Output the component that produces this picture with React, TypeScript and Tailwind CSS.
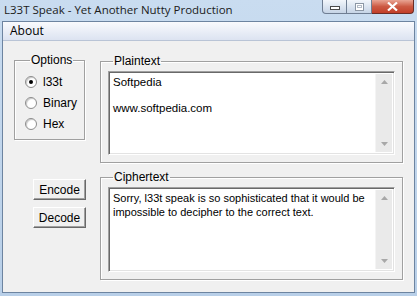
const ui = { fontFamily: '"Liberation Sans", Arial, sans-serif' };
const seg = { fontFamily: '"Open Sans", "Noto Sans", sans-serif' };

function GroupBox({ label, className, children }: { label: string; className: string; children?: React.ReactNode }) {
  return (
    <fieldset
      className={`border border-[#a0a0a0] shadow-[inset_1px_1px_0_#fff,1px_1px_0_#fff] px-[7px] ${className}`}
    >
      <legend className="ml-[5px] px-[1px] text-[12px] leading-[12px] text-black">{label}</legend>
      {children}
    </fieldset>
  );
}

function Radio({ label, checked }: { label: string; checked?: boolean }) {
  return (
    <div className="flex items-center gap-[6px] h-[21px]">
      <div className="w-[12px] h-[12px] rounded-full bg-white border border-[#8c8c8c] shadow-[inset_1px_1px_1px_#c8c8c8] flex items-center justify-center">
        {checked && <div className="w-[4px] h-[4px] rounded-full bg-black" />}
      </div>
      <span className="text-[12px] text-black">{label}</span>
    </div>
  );
}

function ScrollBar() {
  return (
    <div className="w-[17px] h-full bg-[#eaeaea] border-l border-[#f4f4f4] flex flex-col items-center justify-between py-[6px] shrink-0">
      <svg width="7" height="4" viewBox="0 0 7 4"><path d="M3.5 0L7 4H0z" fill="#a8a8a8" /></svg>
      <svg width="7" height="4" viewBox="0 0 7 4"><path d="M0 0h7L3.5 4z" fill="#a8a8a8" /></svg>
    </div>
  );
}

function TextBox({ className, children }: { className: string; children?: React.ReactNode }) {
  return (
    <div
      className={`flex border border-t-[#a0a0a0] border-l-[#a0a0a0] border-r-white border-b-white shadow-[inset_1px_1px_0_#696969,inset_-1px_-1px_0_#e3e3e3] bg-white p-[2px] ${className}`}
    >
      <div className="flex-1 min-w-0 pl-[2px] pt-[1px] text-[11.5px] leading-[14px] text-black">{children}</div>
      <ScrollBar />
    </div>
  );
}

function Button({ label, className }: { label: string; className?: string }) {
  return (
    <div
      className={`w-[53px] h-[21px] flex items-center justify-center bg-[#f0f0f0] border border-t-white border-l-white border-r-[#696969] border-b-[#696969] shadow-[inset_-1px_-1px_0_#a0a0a0] text-[12px] text-black ${className ?? ""}`}
    >
      {label}
    </div>
  );
}

export default function App() {
  return (
    <div className="w-[417px] h-[296px] bg-gradient-to-b from-[#c9dcf0] to-[#b8cfe8] flex flex-col overflow-hidden" style={ui}>
      {/* title bar */}
      <div className="h-[21px] flex items-start justify-between shrink-0">
        <div className="pl-[4px] pt-[1px] text-[11.5px] leading-[18px] text-[#1b1b1b]" style={seg}>
          L33T Speak - Yet Another Nutty Production
        </div>
        <div className="flex mr-[3px]">
          <div className="w-[25px] h-[14px] rounded-bl-[4px] border border-t-0 border-[#6f7e93] bg-gradient-to-b from-[#f2f6fb] to-[#c6d4e6] flex items-center justify-center">
            <div className="w-[10px] h-[4px] border border-[#4a4a4a] bg-white mt-[2px]" />
          </div>
          <div className="w-[25px] h-[14px] border border-t-0 border-l-0 border-[#6f7e93] bg-gradient-to-b from-[#f2f6fb] to-[#c6d4e6] flex items-center justify-center">
            <div className="w-[9px] h-[8px] border border-[#8c97a5] bg-white flex items-center justify-center">
              <div className="w-[5px] h-[3px] border border-[#b4bcc7]" />
            </div>
          </div>
          <div className="w-[42px] h-[14px] rounded-br-[4px] border border-t-0 border-l-0 border-[#6b2d26] bg-gradient-to-b from-[#e8a494] via-[#cc5a44] to-[#c23e28] flex items-center justify-center">
            <svg width="11" height="9" viewBox="0 0 11 9">
              <path d="M1 0.5L10 8.5M10 0.5L1 8.5" stroke="#fff" strokeWidth="2.2" />
            </svg>
          </div>
        </div>
      </div>

      {/* window body */}
      <div className="mx-[2px] mb-[3px] flex-1 border border-[#6d84a0] flex flex-col">
        <div className="h-[19px] border-b border-[#b9c4d6] bg-gradient-to-b from-[#f9fafd] to-[#dce3f1] pl-[7px] text-[12px] leading-[18px] text-black" style={seg}>
          About
        </div>
        <div className="flex-1 bg-[#f0f0f0] flex">
          {/* left column */}
          <div className="w-[97px] shrink-0 flex flex-col">
            <GroupBox label="Options" className="ml-[11px] mt-[13px] w-[70px] h-[86px] pt-[5px] pl-[10px]">
              <Radio label="l33t" checked />
              <Radio label="Binary" />
              <Radio label="Hex" />
            </GroupBox>
            <div className="ml-[30px] mt-[39px] flex flex-col gap-[7px]">
              <Button label="Encode" />
              <Button label="Decode" />
            </div>
          </div>

          {/* right column */}
          <div className="flex flex-col gap-[8px] mt-[14px]">
            <GroupBox label="Plaintext" className="w-[303px] h-[108px] pt-[4px]">
              <TextBox className="h-[84px]">
                <div>Softpedia</div>
                <div className="mt-[12px]">www.softpedia.com</div>
              </TextBox>
            </GroupBox>
            <GroupBox label="Ciphertext" className="w-[303px] h-[109px] pt-[4px]">
              <TextBox className="h-[85px]">
                <div className="text-[11px] whitespace-nowrap">Sorry, l33t speak is so sophisticated that it would be</div>
                <div className="text-[11px] whitespace-nowrap">impossible to decipher to the correct text.</div>
              </TextBox>
            </GroupBox>
          </div>
        </div>
      </div>
    </div>
  );
}
